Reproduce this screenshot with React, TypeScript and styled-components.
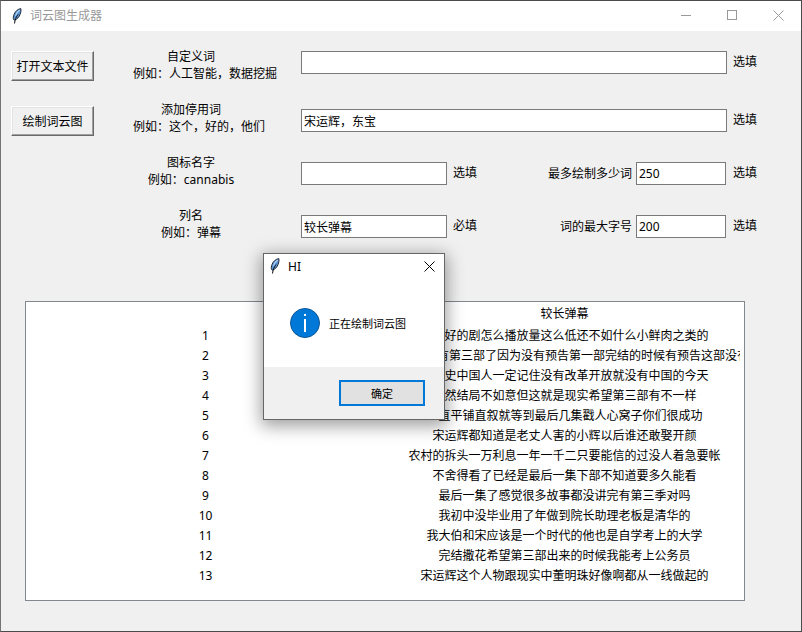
import React, { useId } from "react";
import styled, { createGlobalStyle } from "styled-components";

const GlobalStyle = createGlobalStyle`
  * {
    box-sizing: border-box;
  }
  body {
    margin: 0;
    background: #f0f0f0;
  }
  body,
  button,
  input {
    font-family: "Noto Sans", "Noto Sans CJK SC", sans-serif;
    font-size: 12px;
    color: #000;
  }
`;

const Window = styled.div`
  position: relative;
  min-height: 100vh;
  display: flex;
  flex-direction: column;
  background: #f0f0f0;
  border: 1px solid #4c4a4b;
  border-left-color: #757374;
`;

const TitleBar = styled.header`
  display: flex;
  align-items: center;
  height: 30px;
  padding-left: 10px;
  background: #fff;
`;

const WindowTitle = styled.h1`
  flex: 1;
  margin: 0 0 0 7px;
  font-size: 12px;
  font-weight: 400;
  line-height: 20px;
  color: #999;
`;

const CaptionButton = styled.button<{ $width: number }>`
  display: flex;
  align-items: center;
  justify-content: center;
  width: ${(p) => p.$width}px;
  height: 100%;
  padding: 0;
  border: 0;
  background: transparent;
  color: inherit;
`;

const CaptionControls = styled.div`
  display: flex;
  height: 28px;
  align-self: flex-start;
  button {
    color: #999;
  }
`;

const Main = styled.main`
  display: flex;
  flex: 1;
  flex-direction: column;
  gap: 60px;
  padding: 17px 0 30px;
`;

const Controls = styled.div`
  display: flex;
  align-items: flex-start;
  padding: 0 44px 0 10px;
`;

const Actions = styled.div`
  display: flex;
  flex: none;
  flex-direction: column;
  gap: 25px;
  width: 122px;
  padding: 3px 39px 0 0;
`;

const RaisedButton = styled.button`
  height: 30px;
  padding: 0;
  border: 1px solid;
  border-color: #fff #696969 #696969 #fff;
  background: #f0f0f0;
  box-shadow: inset -1px -1px 0 #a0a0a0, inset 1px 1px 0 #e3e3e3;
  white-space: nowrap;
`;

const Form = styled.form`
  display: flex;
  flex: 1;
  flex-direction: column;
  gap: 19px;
  min-width: 0;
`;

const FormRow = styled.div`
  display: flex;
  align-items: flex-start;
`;

const HintLabel = styled.label`
  display: flex;
  flex: none;
  flex-direction: column;
  align-items: safe center;
  width: 116px;
  margin-right: 52px;
  line-height: 17px;
  white-space: nowrap;
`;

const Fields = styled.div`
  display: flex;
  flex: 1;
  gap: 6px;
  min-width: 0;
  padding-top: 8px;

  ${FormRow}:first-child > & {
    padding-top: 3px;
  }
`;

const TextBox = styled.input<{ $width?: number }>`
  flex: ${(p) => (p.$width ? `0 0 ${p.$width}px` : "1")};
  min-width: 0;
  height: 23px;
  padding: 0 2px;
  border: 1px solid #7a7a7a;
  border-radius: 0;
  background: #fff;
  outline: none;
`;

const Note = styled.span`
  flex: none;
  line-height: 22px;
`;

const NumberField = styled.div`
  display: flex;
  gap: 4px;
  margin: 0 1px 0 auto;
  line-height: 24px;
`;

const TreeFrame = styled.section`
  margin: 0 56px 0 24px;
  padding-bottom: 14px;
  border: 1px solid #828790;
  background: #fff;
`;

const Table = styled.table`
  width: 100%;
  table-layout: fixed;
  border-collapse: collapse;
  text-align: center;

  th,
  td {
    height: 20px;
    padding: 0 4px;
    overflow: hidden;
    font-weight: 400;
    line-height: 20px;
    white-space: nowrap;
  }
  th {
    height: 24px;
  }
`;

const CellText = styled.div`
  overflow: hidden;
`;

const Dialog = styled.div`
  position: absolute;
  top: 252px;
  left: 262px;
  width: 182px;
  border: 1px solid #666;
  background: #fff;
  box-shadow: 0 4px 16px 2px rgba(0, 0, 0, 0.38);
`;

const DialogTitleBar = styled.div`
  display: flex;
  align-items: center;
  height: 24px;
  padding-left: 5px;
`;

const DialogTitle = styled.h2`
  flex: 1;
  margin: 0 0 0 7px;
  font-size: 12px;
  font-weight: 400;
`;

const DialogBody = styled.div`
  display: flex;
  align-items: center;
  gap: 9px;
  height: 89px;
  padding: 1px 0 0 26px;
  font-size: 11px;
`;

const DialogFooter = styled.div`
  display: flex;
  justify-content: flex-end;
  padding: 13px 19px;
  background: #f0f0f0;
`;

const DefaultButton = styled.button`
  width: 86px;
  height: 26px;
  padding: 0;
  border: 2px solid #0078d7;
  background: #e1e1e1;
  font-size: 11px;
`;

const Feather = () => (
  <svg width="12" height="16" viewBox="0 0 12 16" aria-hidden="true">
    <path
      d="M9.800.6C6.800 1 4.100 3.400 3 6.500 2.300 8.400 2 10 2.600 11.600L3.600 12.200C6 11.300 8 9.300 9 6.600 9.800 4.600 10.300 2.200 9.800.6Z"
      fill="#5b95d8"
      stroke="#16181d"
      strokeWidth=".9"
    />
    <path d="M8.700 2C6.600 3.200 5.200 5.400 4.600 8" fill="none" stroke="#b9d7f2" strokeWidth="1.100" />
    <path d="M7 6.500C5.200 8.800 4 11.500 3.500 15.500" fill="none" stroke="#0b0b0f" strokeWidth="1" />
  </svg>
);

const CloseGlyph = () => (
  <svg width="11" height="11" viewBox="0 0 11 11" aria-hidden="true">
    <path d="M.5.5l10 10M10.500.5l-10 10" stroke="currentColor" strokeWidth="1" />
  </svg>
);

const InfoGlyph = () => (
  <svg width="30" height="30" viewBox="0 0 30 30" aria-hidden="true">
    <circle cx="15" cy="15" r="14.500" fill="#0078d7" stroke="#0a5696" />
    <rect x="14" y="6" width="2" height="2" fill="#fff" />
    <rect x="14" y="11" width="2" height="13" fill="#fff" />
  </svg>
);

interface HintedRowProps {
  title: string;
  example: string;
  value?: string;
  width?: number;
  note: string;
  children?: React.ReactNode;
}

function HintedRow({ title, example, value = "", width, note, children }: HintedRowProps) {
  const id = useId();
  return (
    <FormRow>
      <HintLabel htmlFor={id}>
        <span>{title}</span>
        <span>{example}</span>
      </HintLabel>
      <Fields>
        <TextBox id={id} type="text" defaultValue={value} $width={width} />
        <Note>{note}</Note>
        {children}
      </Fields>
    </FormRow>
  );
}

function LimitField({ label, value }: { label: string; value: string }) {
  const id = useId();
  return (
    <>
      <NumberField>
        <label htmlFor={id}>{label}</label>
        <TextBox id={id} type="text" inputMode="numeric" defaultValue={value} $width={90} />
      </NumberField>
      <Note>选填</Note>
    </>
  );
}

const comments = [
  "这么好的剧怎么播放量这么低还不如什么小鲜肉之类的",
  "好期待还有第三部了因为没有预告第一部完结的时候有预告这部没有",
  "看历史中国人一定记住没有改革开放就没有中国的今天",
  "虽然结局不如意但这就是现实希望第三部有不一样",
  "一直平铺直叙就等到最后几集戳人心窝子你们很成功",
  "宋运辉都知道是老丈人害的小辉以后谁还敢娶开颜",
  "农村的拆头一万利息一年一千二只要能信的过没人着急要帐",
  "不舍得看了已经是最后一集下部不知道要多久能看",
  "最后一集了感觉很多故事都没讲完有第三季对吗",
  "我初中没毕业用了年做到院长助理老板是清华的",
  "我大伯和宋应该是一个时代的他也是自学考上的大学",
  "完结撒花希望第三部出来的时候我能考上公务员",
  "宋运辉这个人物跟现实中董明珠好像啊都从一线做起的",
];

export default function App() {
  return (
    <>
      <GlobalStyle />
      <Window lang="zh-CN">
        <TitleBar>
          <Feather />
          <WindowTitle>词云图生成器</WindowTitle>
          <CaptionControls>
            <CaptionButton $width={46} aria-label="最小化">
              <svg width="10" height="11" aria-hidden="true">
                <path d="M0 5.500h10" stroke="currentColor" />
              </svg>
            </CaptionButton>
            <CaptionButton $width={46} aria-label="最大化">
              <svg width="10" height="10" aria-hidden="true">
                <rect x=".5" y=".5" width="9" height="9" fill="none" stroke="currentColor" />
              </svg>
            </CaptionButton>
            <CaptionButton $width={46} aria-label="关闭">
              <CloseGlyph />
            </CaptionButton>
          </CaptionControls>
        </TitleBar>

        <Main>
          <Controls>
            <Actions>
              <RaisedButton type="button">打开文本文件</RaisedButton>
              <RaisedButton type="button">绘制词云图</RaisedButton>
            </Actions>
            <Form onSubmit={(e) => e.preventDefault()}>
              <HintedRow title="自定义词" example="例如：人工智能，数据挖掘" note="选填" />
              <HintedRow title="添加停用词" example="例如：这个，好的，他们" value="宋运辉，东宝" note="选填" />
              <HintedRow title="图标名字" example="例如：cannabis" width={146} note="选填">
                <LimitField label="最多绘制多少词" value="250" />
              </HintedRow>
              <HintedRow title="列名" example="例如：弹幕" value="较长弹幕" width={146} note="必填">
                <LimitField label="词的最大字号" value="200" />
              </HintedRow>
            </Form>
          </Controls>

          <TreeFrame>
            <Table>
              <thead>
                <tr>
                  <th scope="col" />
                  <th scope="col">较长弹幕</th>
                </tr>
              </thead>
              <tbody>
                {comments.map((comment, index) => (
                  <tr key={comment}>
                    <td>{index + 1}</td>
                    <td>
                      <CellText>{comment}</CellText>
                    </td>
                  </tr>
                ))}
              </tbody>
            </Table>
          </TreeFrame>
        </Main>

        <Dialog role="dialog" aria-labelledby="dialog-title">
          <DialogTitleBar>
            <Feather />
            <DialogTitle id="dialog-title">HI</DialogTitle>
            <CaptionButton $width={30} aria-label="关闭">
              <CloseGlyph />
            </CaptionButton>
          </DialogTitleBar>
          <DialogBody>
            <InfoGlyph />
            <span>正在绘制词云图</span>
          </DialogBody>
          <DialogFooter>
            <DefaultButton type="button">确定</DefaultButton>
          </DialogFooter>
        </Dialog>
      </Window>
    </>
  );
}
